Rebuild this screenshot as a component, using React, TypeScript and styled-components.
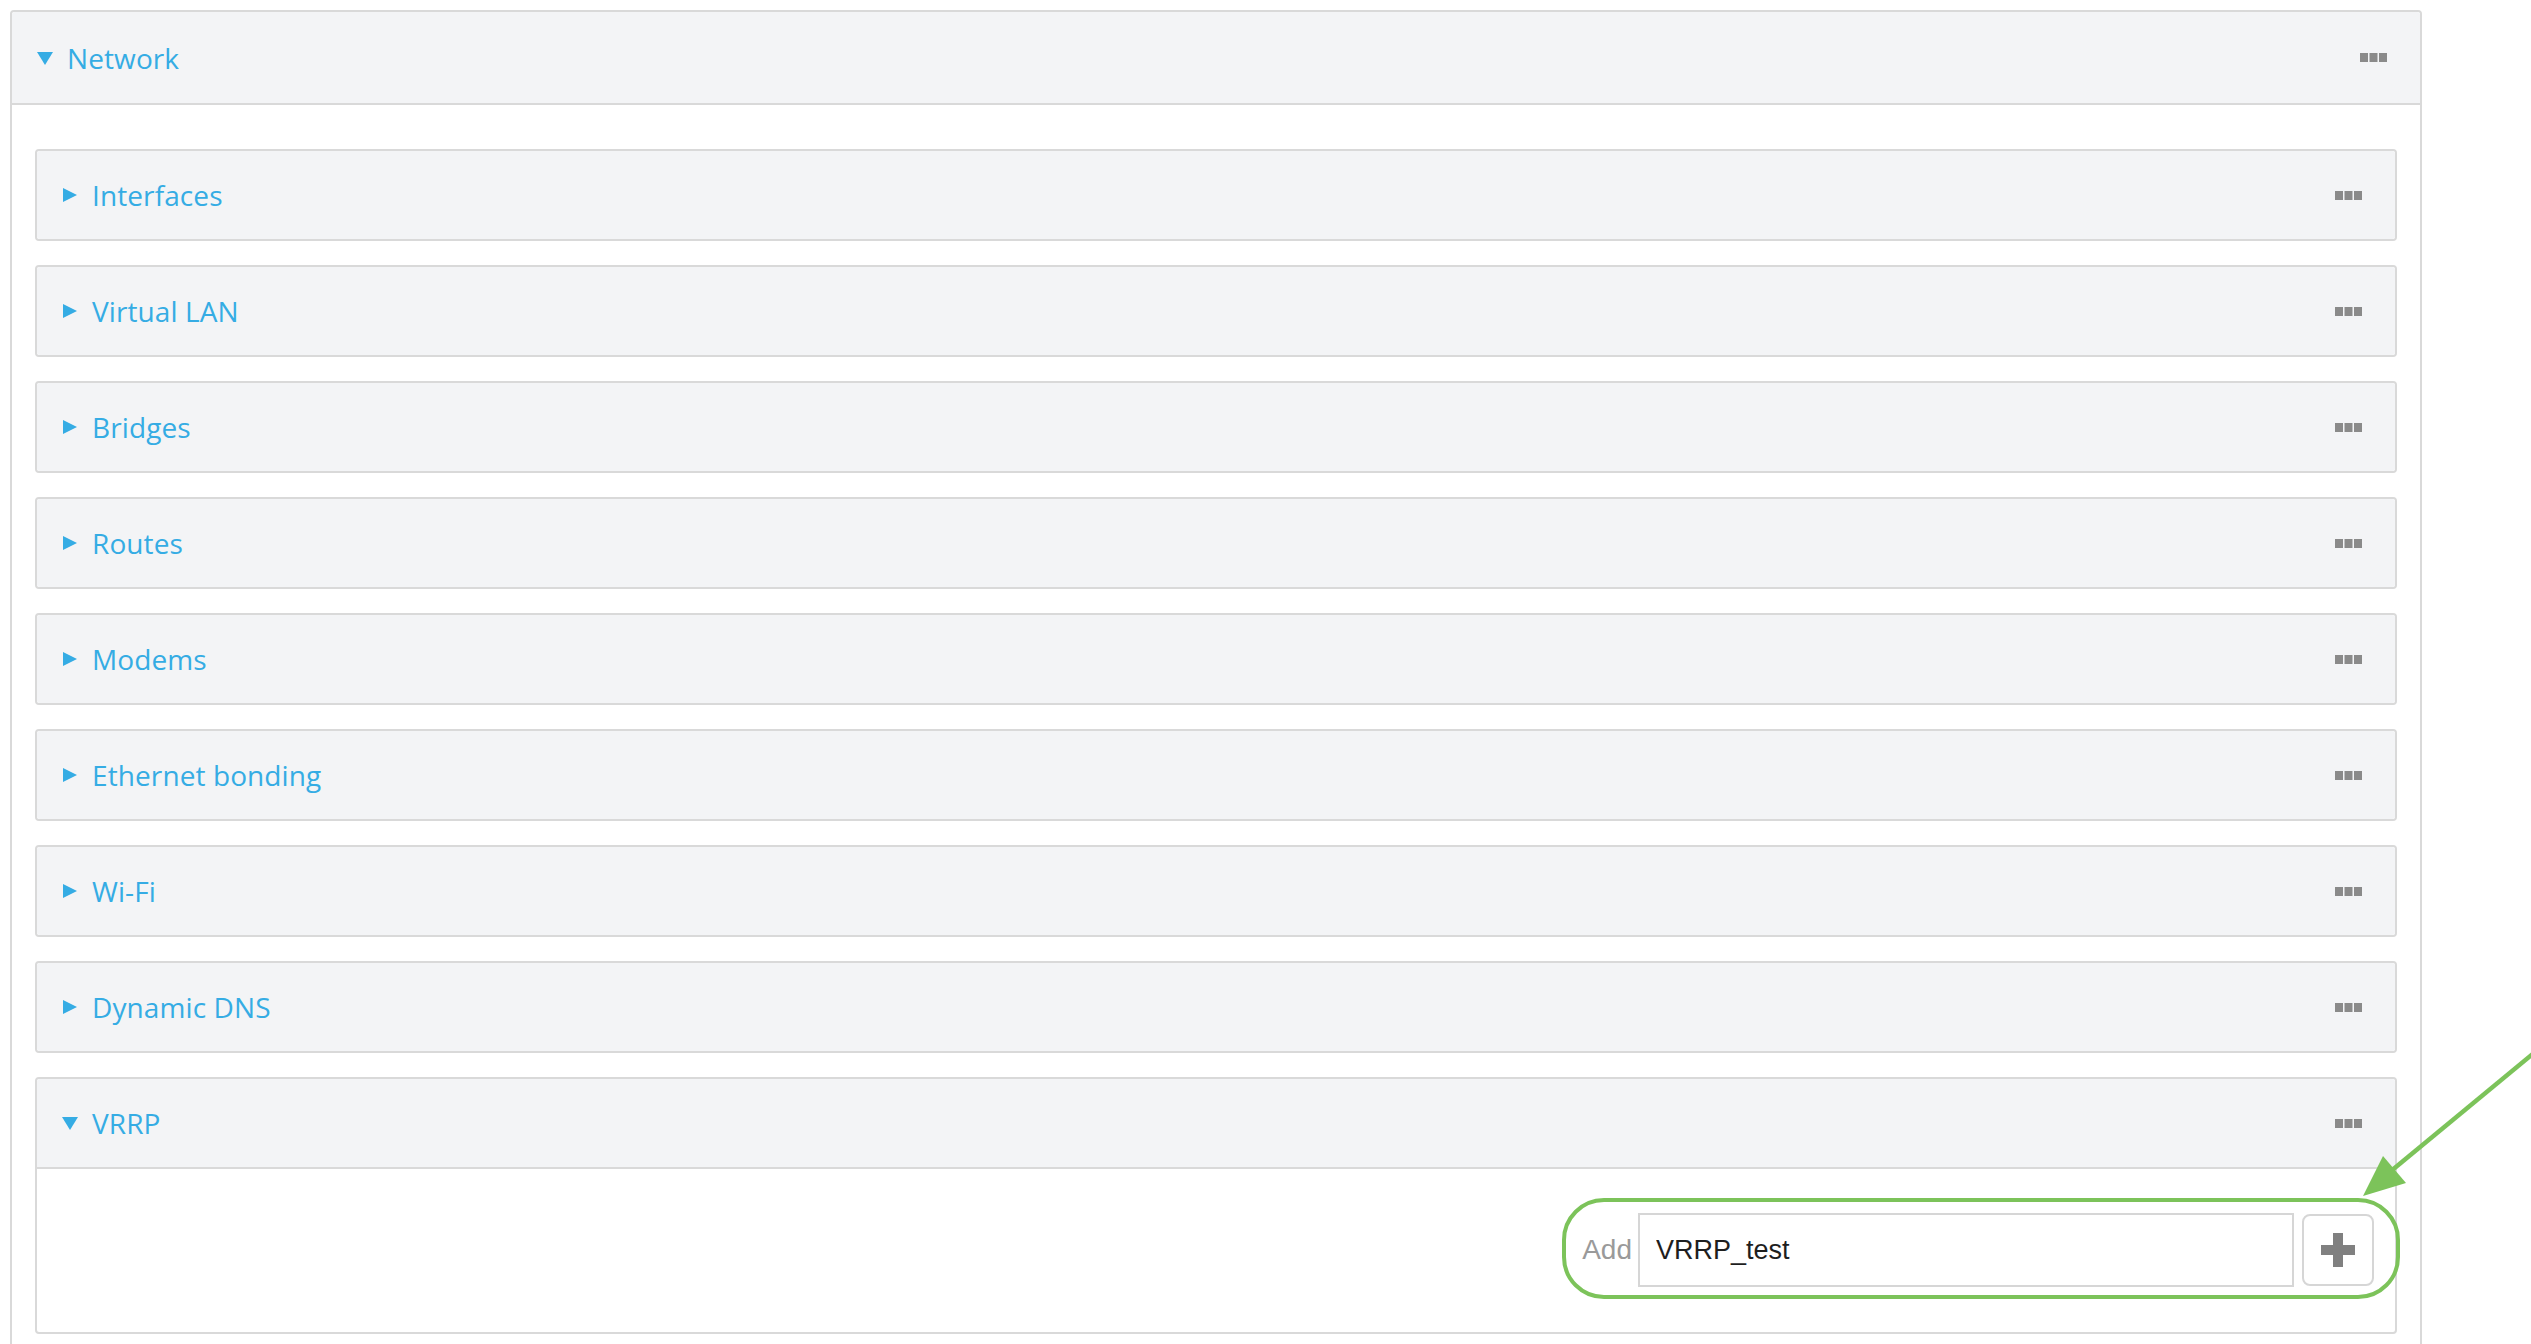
import React from "react";
import styled, { createGlobalStyle } from "styled-components";

const GlobalStyle = createGlobalStyle`
  html, body {
    margin: 0;
    padding: 0;
    background: #ffffff;
    font-family: "Open Sans", "Liberation Sans", Arial, sans-serif;
  }
  * { box-sizing: border-box; }
`;

const Page = styled.div`
  position: relative;
  width: 2531px;
  min-height: 1344px;
  padding: 10px 0 0 10px;
  overflow: hidden;
`;

const OuterPanel = styled.section`
  width: 2412px;
  border: 2px solid #d9d9d9;
  border-radius: 4px;
  background: #ffffff;
`;

const Header = styled.div<{ $outer?: boolean; $open?: boolean }>`
  display: flex;
  align-items: center;
  height: ${(p) => (p.$outer ? 91 : 88) + (p.$open ? 2 : 0)}px;
  padding: 0 33px 0 25px;
  background: #f3f4f6;
  border-bottom: ${(p) => (p.$open ? "2px solid #d9d9d9" : "none")};
  border-radius: 3px 3px ${(p) => (p.$open ? "0 0" : "3px 3px")};
`;

const Title = styled.span`
  flex: 1;
  display: flex;
  align-items: center;
  gap: 14px;
  color: #35ace4;
  font-family: "Open Sans", sans-serif;
  font-size: 28px;
  font-weight: 400;
  letter-spacing: 0.1px;
`;

const OuterBody = styled.div`
  display: flex;
  flex-direction: column;
  gap: 24px;
  padding: 44px 23px 40px 23px;
`;

const Section = styled.div`
  border: 2px solid #d9d9d9;
  border-radius: 4px;
  background: #ffffff;
`;

const SectionBody = styled.div`
  display: flex;
  justify-content: flex-end;
  align-items: center;
  padding: 44px 21px 45px 21px;
`;

const AddGroup = styled.div`
  position: relative;
  display: flex;
  align-items: center;

  &::before {
    content: "";
    position: absolute;
    left: -20px;
    right: -26px;
    top: -15px;
    bottom: -12px;
    border: 4px solid #7cc35a;
    border-radius: 42px;
    pointer-events: none;
  }
`;

const AddLabel = styled.label`
  font-family: "Liberation Sans", Arial, sans-serif;
  font-size: 28px;
  color: #9a9a9a;
  margin-right: 6px;
`;

const TextInput = styled.input`
  width: 656px;
  height: 74px;
  border: 2px solid #d6d6d6;
  border-radius: 0;
  padding: 0 16px;
  font-family: "Liberation Sans", Arial, sans-serif;
  font-size: 27px;
  color: #1e1e1e;
  background: #ffffff;
  outline: none;
`;

const PlusButton = styled.button`
  display: flex;
  align-items: center;
  justify-content: center;
  width: 72px;
  height: 72px;
  margin-left: 8px;
  border: 2px solid #d6d6d6;
  border-radius: 8px;
  background: #ffffff;
  padding: 0;
  cursor: pointer;
`;

const ArrowLayer = styled.svg`
  position: absolute;
  left: 0;
  top: 0;
  pointer-events: none;
`;

const Caret = ({ open }: { open?: boolean }) =>
  open ? (
    <svg width="16" height="14" viewBox="0 0 16 14">
      <polygon points="0,1 16,1 8,14" fill="#35ace4" />
    </svg>
  ) : (
    <svg width="16" height="14" viewBox="0 0 16 14">
      <polygon points="1,0 15,7 1,14" fill="#35ace4" />
    </svg>
  );

const Dots = () => (
  <svg width="27" height="9" viewBox="0 0 27 9">
    <rect x="0" y="0" width="8" height="9" fill="#8a8a8a" />
    <rect x="9.5" y="0" width="8" height="9" fill="#8a8a8a" />
    <rect x="19" y="0" width="8" height="9" fill="#8a8a8a" />
  </svg>
);

const PlusIcon = () => (
  <svg width="34" height="34" viewBox="0 0 34 34">
    <rect x="12" y="0" width="10" height="34" fill="#808080" />
    <rect x="0" y="12" width="34" height="10" fill="#808080" />
  </svg>
);

const sections = [
  "Interfaces",
  "Virtual LAN",
  "Bridges",
  "Routes",
  "Modems",
  "Ethernet bonding",
  "Wi-Fi",
  "Dynamic DNS",
];

export default function App() {
  return (
    <>
      <GlobalStyle />
      <Page>
        <OuterPanel>
          <Header $outer $open>
            <Title>
              <Caret open />
              Network
            </Title>
            <Dots />
          </Header>
          <OuterBody>
            {sections.map((name) => (
              <Section key={name}>
                <Header>
                  <Title>
                    <Caret />
                    {name}
                  </Title>
                  <Dots />
                </Header>
              </Section>
            ))}
            <Section>
              <Header $open>
                <Title>
                  <Caret open />
                  VRRP
                </Title>
                <Dots />
              </Header>
              <SectionBody>
                <AddGroup>
                  <AddLabel>Add</AddLabel>
                  <TextInput defaultValue="VRRP_test" />
                  <PlusButton aria-label="Add">
                    <PlusIcon />
                  </PlusButton>
                </AddGroup>
              </SectionBody>
            </Section>
          </OuterBody>
        </OuterPanel>
        <ArrowLayer width="2531" height="1344" viewBox="0 0 2531 1344">
          <line x1="2535" y1="1052" x2="2385" y2="1176" stroke="#7cc35a" strokeWidth="4.5" />
          <polygon points="2363,1196 2383,1156 2406,1183" fill="#7cc35a" />
        </ArrowLayer>
      </Page>
    </>
  );
}
